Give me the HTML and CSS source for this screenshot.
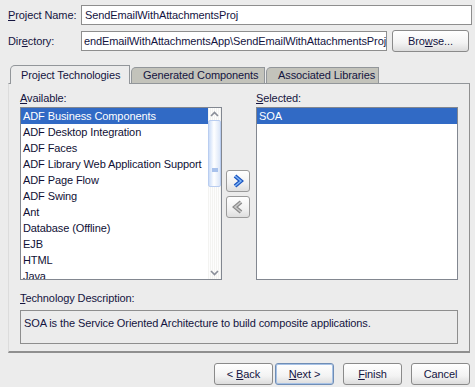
FILE: index.html
```html
<!DOCTYPE html>
<html lang="en">
  <head>
    <title>Create Project</title>
    <link rel="stylesheet" href="styles.css">
  </head>

  <body>
    <div class="Dialog">
      <!-- Project name / directory -->
      <div class="fieldRow">
        <label class="fieldLabel"><u>P</u>roject Name:</label>
        <div class="textBox">SendEmailWithAttachmentsProj</div>
      </div>
      <div class="fieldRow">
        <label class="fieldLabel">Dir<u>e</u>ctory:</label>
        <div class="textBox dirBox">endEmailWithAttachmentsApp\SendEmailWithAttachmentsProj</div>
        <button class="btn browseBtn">Bro<u>w</u>se...</button>
      </div>

      <!-- Tabs -->
      <div class="Tabs">
        <div class="tabStrip">
          <div class="tab active">Project Technologies</div>
          <div class="tab">Generated Components</div>
          <div class="tab">Associated Libraries</div>
        </div>

        <div class="tabPanel">
          <div class="shuttle">
            <label class="listLabel"><u>A</u>vailable:</label>
            <span></span>
            <label class="listLabel"><u>S</u>elected:</label>

            <div class="listBox">
              <ul class="items">
                <li class="selected">ADF Business Components</li>
                <li>ADF Desktop Integration</li>
                <li>ADF Faces</li>
                <li>ADF Library Web Application Support</li>
                <li>ADF Page Flow</li>
                <li>ADF Swing</li>
                <li>Ant</li>
                <li>Database (Offline)</li>
                <li>EJB</li>
                <li>HTML</li>
                <li class="partial">Java</li>
              </ul>
              <div class="scrollBar">
                <div class="scrollArrow">
                  <svg width="9" height="6" viewBox="0 0 9 6"><polyline points="1,5 4.5,1.5 8,5" fill="none" stroke="#8a8e99" stroke-width="1.6"/></svg>
                </div>
                <div class="scrollThumb"><span class="grip"></span></div>
                <div class="scrollTrack"></div>
                <div class="scrollArrow">
                  <svg width="9" height="6" viewBox="0 0 9 6"><polyline points="1,1 4.5,4.5 8,1" fill="none" stroke="#8a8e99" stroke-width="1.6"/></svg>
                </div>
              </div>
            </div>

            <div class="mover">
              <button class="moveBtn">
                <svg width="12" height="14" viewBox="0 0 12 14">
                  <polyline points="3,2 9,7 3,12" fill="none" stroke="#1d55c0" stroke-width="4" stroke-linejoin="miter"/>
                  <polyline points="3,2 9,7 3,12" fill="none" stroke="#7db5f7" stroke-width="1.5" stroke-linejoin="miter"/>
                </svg>
              </button>
              <button class="moveBtn">
                <svg width="12" height="14" viewBox="0 0 12 14">
                  <polyline points="9,2 3,7 9,12" fill="none" stroke="#8c8c8c" stroke-width="4" stroke-linejoin="miter"/>
                  <polyline points="9,2 3,7 9,12" fill="none" stroke="#c9c9c9" stroke-width="1.5" stroke-linejoin="miter"/>
                </svg>
              </button>
            </div>

            <div class="listBox">
              <ul class="items full">
                <li class="selected">SOA</li>
              </ul>
            </div>
          </div>

          <label class="listLabel descLabel"><u>T</u>echnology Description:</label>
          <div class="descBox">SOA is the Service Oriented Architecture to build composite applications.</div>
        </div>
      </div>

      <!-- Wizard buttons -->
      <div class="footer">
        <div class="navPair">
          <button class="btn navBtn">&lt; <u>B</u>ack</button>
          <button class="btn navBtn defaultBtn"><u>N</u>ext &gt;</button>
        </div>
        <button class="btn navBtn"><u>F</u>inish</button>
        <button class="btn navBtn">Cancel</button>
      </div>
    </div>
  </body>
</html>
```

FILE: styles.css
```css
body {
  margin: 0;
  background: #ececec;
}

.Dialog {
  width: 475px;
  height: 387px;
  box-sizing: border-box;
  padding: 5px 3px 0 8px;
  font-family: "Liberation Sans", Arial, sans-serif;
  font-size: 11px;
  letter-spacing: -0.1px;
  color: #14143f;
}

u {
  text-decoration: underline;
}

.fieldRow {
  display: flex;
  align-items: center;
  height: 20px;
  margin-bottom: 5px;
}

.fieldRow + .fieldRow {
  height: 22px;
}

.fieldLabel {
  width: 73px;
  flex: none;
}

.textBox {
  flex: 1;
  height: 20px;
  box-sizing: border-box;
  border: 1px solid #8e8e8e;
  background: white;
  padding: 0 3px;
  line-height: 18px;
  white-space: nowrap;
  overflow: hidden;
}

.dirBox {
  flex: none;
  width: 306px;
  padding-left: 2px;
}

.btn {
  font-family: inherit;
  font-size: 11px;
  letter-spacing: -0.1px;
  color: #14143f;
  height: 22px;
  box-sizing: border-box;
  border: 1px solid #8a8a8a;
  border-radius: 3px;
  background: linear-gradient(#ffffff, #f3f3f3 60%, #dcdcdc);
  padding: 0;
  cursor: pointer;
}

.browseBtn {
  width: 77px;
  margin-left: 5px;
}

/* Tabs */
.Tabs {
  margin-top: 13px;
  width: 462px;
}

.tabStrip {
  display: flex;
  align-items: flex-end;
  height: 18px;
  padding-left: 2px;
  position: relative;
  z-index: 1;
}

.tab {
  box-sizing: border-box;
  height: 16px;
  padding: 0 9px 0 11px;
  line-height: 15px;
  border: 1px solid #92969a;
  border-bottom: none;
  border-radius: 5px 0 0 0;
  background: #c3c3bb;
  margin-right: 1px;
  white-space: nowrap;
}

.tab.active {
  height: 19px;
  margin-bottom: -1px;
  background: #ececec;
  padding: 1px 10px 0 10px;
  line-height: 16px;
  width: 120px;
}

.tab:nth-child(2) {
  width: 134px;
}

.tab:nth-child(3) {
  width: 113px;
}

.tabPanel {
  height: 270px;
  box-sizing: border-box;
  border-top: 1px solid #92969a;
  border-left: 1px solid #dcdcdc;
  border-right: 1px solid #8f8f8f;
  border-bottom: 2px solid #8f8f8f;
  padding: 7px 12px 0 11px;
}

.shuttle {
  display: grid;
  grid-template-columns: 202px 34px 202px;
  grid-template-rows: 16px 173px;
}

.listLabel {
  display: block;
  line-height: 14px;
}

.listBox {
  display: flex;
  box-sizing: border-box;
  border: 1px solid #828790;
  background: white;
  overflow: hidden;
}

.items {
  list-style: none;
  margin: 0;
  padding: 0;
  flex: 1;
  color: #101035;
}

.items li {
  height: 16px;
  line-height: 16px;
  padding-left: 2px;
  white-space: nowrap;
}

.items li.partial {
  height: 11px;
  overflow: hidden;
}

.items li.selected {
  background: #316ac5;
  color: white;
}

.scrollBar {
  width: 13px;
  display: flex;
  flex-direction: column;
  background: repeating-linear-gradient(90deg, #f3f3f1 0 1px, #fdfdfd 1px 2px);
}

.scrollArrow {
  height: 12px;
  display: flex;
  align-items: center;
  justify-content: center;
}

.scrollThumb {
  height: 67px;
  box-sizing: border-box;
  border: 1px solid #b9cdf0;
  border-radius: 2px;
  background: linear-gradient(90deg, #cadcf8, #ffffff 45%, #dbe6f8);
  display: flex;
  align-items: center;
  justify-content: center;
}

.grip {
  width: 6px;
  height: 4px;
  background: #a9c2ec;
  margin-top: 32px;
}

.scrollTrack {
  flex: 1;
}

.mover {
  display: flex;
  flex-direction: column;
  justify-content: center;
  align-items: center;
  gap: 4px;
  padding-right: 2px;
}

.moveBtn {
  width: 24px;
  height: 22px;
  box-sizing: border-box;
  border: 1px solid #9a9a9a;
  border-radius: 3px;
  background: linear-gradient(#ffffff, #f1f1f1 60%, #dedede);
  padding: 0;
  display: flex;
  align-items: center;
  justify-content: center;
}

.items.full {
  width: 100%;
}

.descLabel {
  margin-top: 11px;
}

.descBox {
  margin-top: 5px;
  height: 34px;
  width: 438px;
  box-sizing: border-box;
  border: 1px solid #8e8e8e;
  padding: 5px 3px;
  line-height: 14px;
}

/* Footer */
.footer {
  display: flex;
  justify-content: flex-end;
  gap: 9px;
  margin-top: 10px;
  padding-right: 2px;
}

.navPair {
  display: flex;
  gap: 2px;
}

.navBtn {
  width: 59px;
}

.defaultBtn {
  border-color: #6f8db5;
  box-shadow: inset 0 0 0 1px #a7c2e6;
}
```
